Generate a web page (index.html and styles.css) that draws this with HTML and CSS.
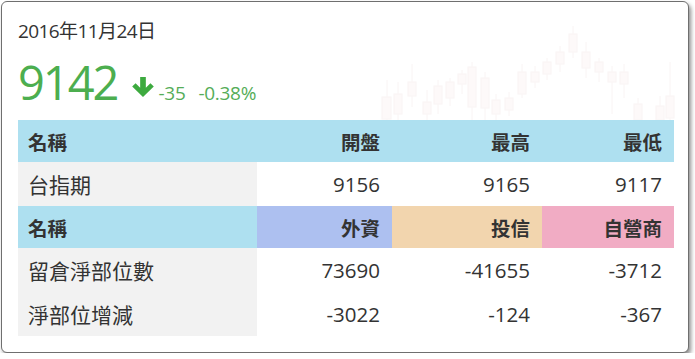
FILE: index.html
```html
<!DOCTYPE html>
<html lang="zh-Hant">
<head>
<meta charset="utf-8">
<title>台指期</title>
<link rel="stylesheet" href="styles.css">
</head>
<body>
<div class="card">
  <svg class="bg-chart" width="686" height="350" viewBox="0 0 686 350" aria-hidden="true">
    <g stroke="#f3e6e6" stroke-width="1" fill="#fbf1f1">
      <line x1="385" y1="78" x2="385" y2="118"/><rect x="380" y="95" width="9" height="22"/>
      <line x1="396" y1="80" x2="396" y2="118"/><rect x="392" y="92" width="8" height="20"/>
      <line x1="410" y1="62" x2="410" y2="105"/><rect x="406" y="80" width="8" height="14"/>
      <line x1="425" y1="88" x2="425" y2="120"/><rect x="421" y="100" width="8" height="12"/>
      <line x1="436" y1="78" x2="436" y2="112"/><rect x="432" y="84" width="8" height="18"/>
      <line x1="448" y1="76" x2="448" y2="104"/><rect x="444" y="80" width="8" height="16"/>
      <line x1="460" y1="68" x2="460" y2="92"/><rect x="456" y="72" width="8" height="10"/>
      <line x1="470" y1="60" x2="470" y2="118"/><rect x="466" y="65" width="8" height="40"/>
      <line x1="483" y1="70" x2="483" y2="120"/><rect x="479" y="76" width="8" height="30"/>
      <line x1="494" y1="92" x2="494" y2="118"/><rect x="490" y="98" width="8" height="14"/>
      <line x1="507" y1="90" x2="507" y2="114"/><rect x="503" y="96" width="8" height="12"/>
      <line x1="520" y1="62" x2="520" y2="96"/><rect x="516" y="70" width="8" height="22"/>
      <line x1="533" y1="64" x2="533" y2="86"/><rect x="529" y="70" width="8" height="10"/>
      <line x1="545" y1="56" x2="545" y2="78"/><rect x="541" y="60" width="8" height="12"/>
      <line x1="558" y1="44" x2="558" y2="70"/><rect x="554" y="50" width="8" height="12"/>
      <line x1="571" y1="24" x2="571" y2="56"/><rect x="567" y="32" width="8" height="18"/>
      <line x1="584" y1="40" x2="584" y2="76"/><rect x="580" y="50" width="8" height="16"/>
      <line x1="597" y1="56" x2="597" y2="80"/><rect x="593" y="60" width="8" height="10"/>
      <line x1="610" y1="64" x2="610" y2="112"/><rect x="606" y="70" width="8" height="10"/>
      <line x1="622" y1="62" x2="622" y2="96"/><rect x="618" y="70" width="8" height="12"/>
      <line x1="636" y1="96" x2="636" y2="120"/><rect x="632" y="102" width="8" height="16"/>
      <line x1="658" y1="94" x2="658" y2="120"/><rect x="654" y="104" width="8" height="14"/>
      <line x1="668" y1="60" x2="668" y2="120"/><rect x="664" y="94" width="8" height="22"/>
    </g>
  </svg>
  <div class="date">2016年11月24日</div>
  <div class="quote">
    <span class="price">9142</span>
    <svg class="arrow" width="22" height="21" viewBox="0 0 21 20" aria-hidden="true">
      <path d="M7.8 1h5.4v10.2l4.4-4.4 3.2 3.2L10.5 20 0.2 10l3.2-3.2 4.4 4.4z" fill="#3daa3f"/>
    </svg>
    <span class="chg">-35</span>
    <span class="chg">-0.38%</span>
  </div>
  <table class="tbl">
    <colgroup>
      <col class="c1"><col class="c2"><col class="c3"><col class="c4">
    </colgroup>
    <tr class="head">
      <th class="name">名稱</th><th>開盤</th><th>最高</th><th>最低</th>
    </tr>
    <tr>
      <td class="name">台指期</td><td>9156</td><td>9165</td><td>9117</td>
    </tr>
    <tr class="head">
      <th class="name">名稱</th><th class="foreign">外資</th><th class="trust">投信</th><th class="dealer">自營商</th>
    </tr>
    <tr>
      <td class="name">留倉淨部位數</td><td>73690</td><td>-41655</td><td>-3712</td>
    </tr>
    <tr>
      <td class="name">淨部位增減</td><td>-3022</td><td>-124</td><td>-367</td>
    </tr>
  </table>
</div>
</body>
</html>
```

FILE: styles.css
```css
html, body {
  margin: 0;
  padding: 0;
  background: #ffffff;
}

body {
  font-family: "Open Sans", "Noto Sans CJK TC", sans-serif;
  color: #333333;
}

.card {
  position: relative;
  margin: 1px 0 0 1px;
  width: 656px;
  padding: 16px 14px 16px 16px;
  border: 1px solid #6f6f6f;
  border-radius: 6px;
  background: #ffffff;
  box-shadow: 2px 3px 4px rgba(0, 0, 0, 0.45);
}

.bg-chart {
  position: absolute;
  left: 0;
  top: 0;
  opacity: 0.4;
  pointer-events: none;
}

.date {
  position: relative;
  font-size: 19px;
  line-height: 26px;
  color: #333333;
  letter-spacing: -0.6px;
}

.quote {
  position: relative;
  display: flex;
  align-items: baseline;
  margin-top: 8px;
  height: 60px;
  color: #4cae4f;
}

.price {
  font-size: 47px;
  line-height: 60px;
  letter-spacing: -2px;
  margin-right: 14px;
}

.arrow {
  align-self: center;
  margin-top: 8px;
  margin-right: 5px;
}

.chg {
  font-size: 19px;
  margin-right: 13px;
  letter-spacing: -0.3px;
  color: #55ad58;
}

.tbl {
  position: relative;
  width: 656px;
  border-collapse: collapse;
  table-layout: fixed;
  margin-top: 8px;
}

.c1 { width: 239px; }
.c2 { width: 135px; }
.c3 { width: 150px; }
.c4 { width: 132px; }

.tbl th, .tbl td {
  padding: 0 12px 0 10px;
  text-align: right;
  white-space: nowrap;
}

.tbl th {
  height: 42px;
  font-weight: bold;
  font-size: 19.5px;
  color: #333333;
  background: #aee0f0;
}

.tbl td {
  height: 44px;
  font-size: 20.5px;
  color: #333333;
}

.tbl .name {
  text-align: left;
}

.tbl td.name {
  font-size: 21px;
  background: #f2f2f2;
}

.tbl th.foreign { background: #adc0f0; }
.tbl th.trust { background: #f2d5ae; }
.tbl th.dealer { background: #f1acc4; }
```
